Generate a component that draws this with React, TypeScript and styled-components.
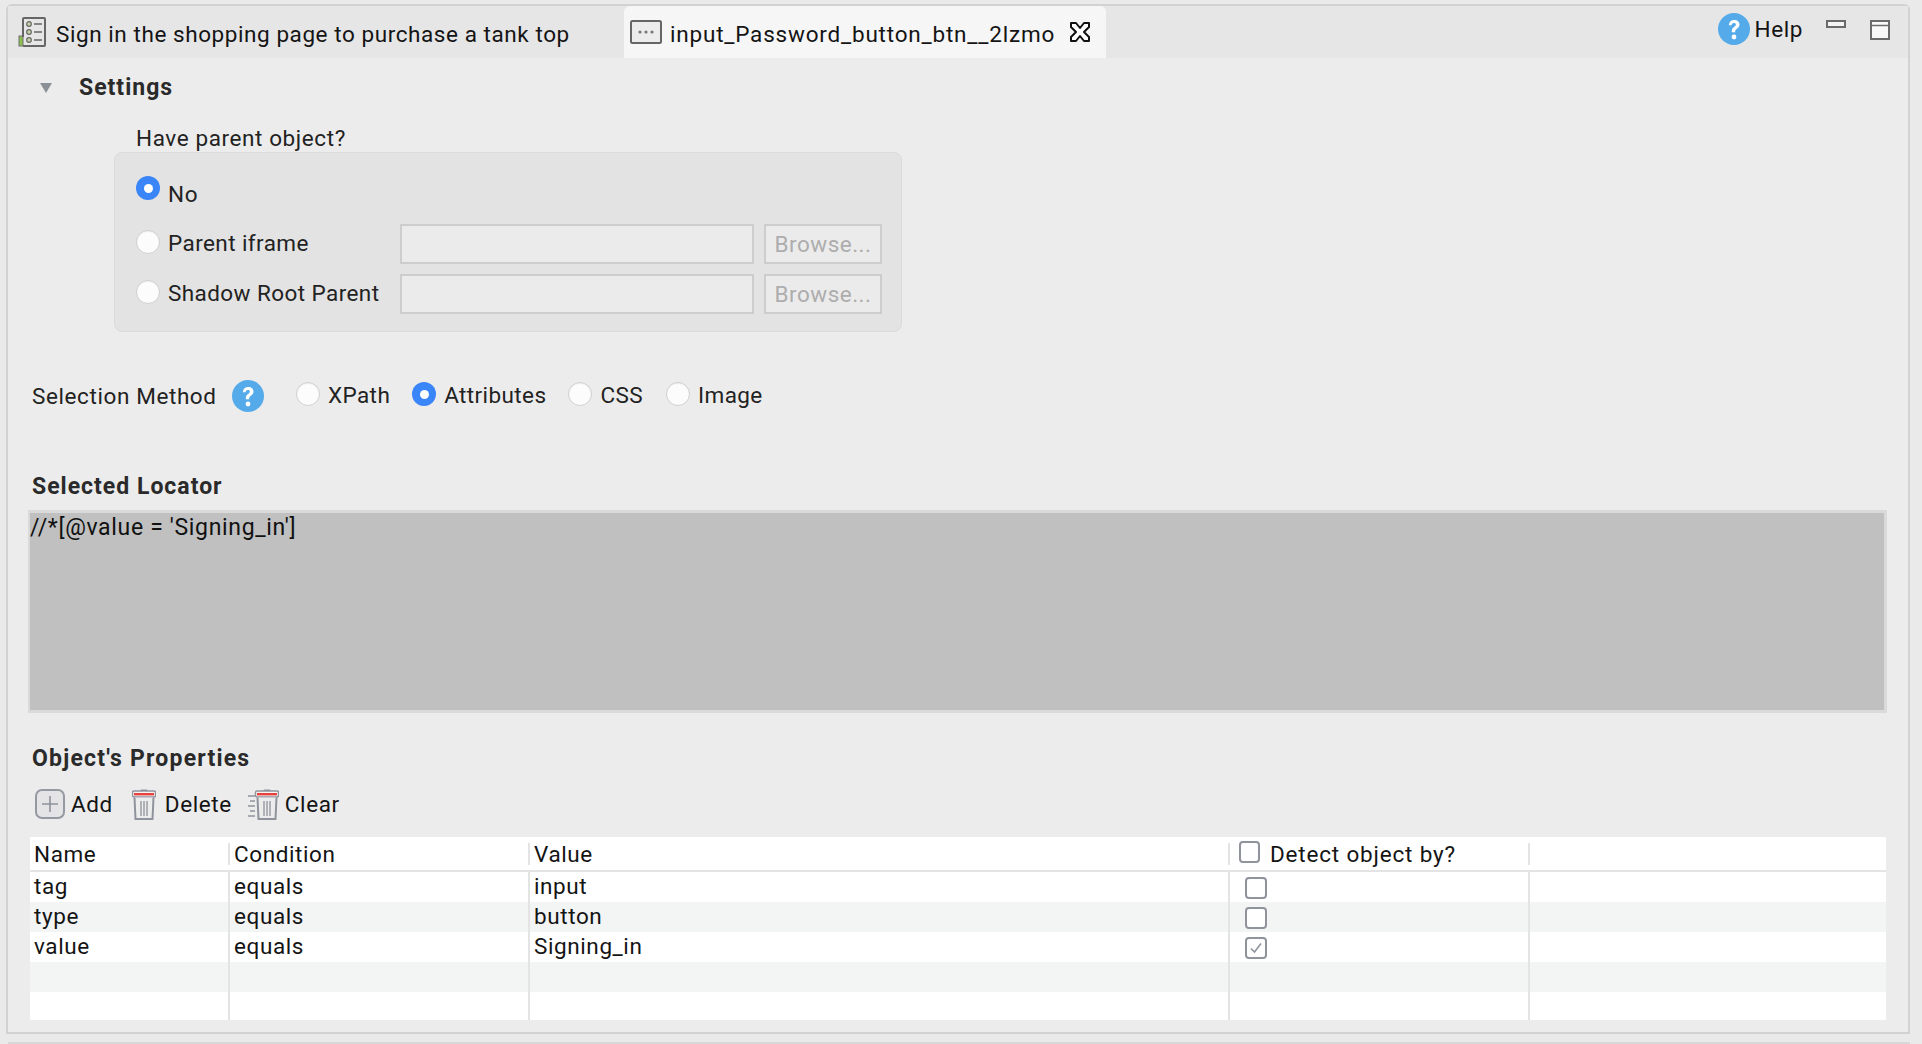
import React from "react";
import styled, { createGlobalStyle } from "styled-components";

const Global = createGlobalStyle`
  html, body { margin: 0; padding: 0; height: 1044px; overflow: hidden; background: #eaeaea; }
  body { font-family: Roboto, "Liberation Sans", sans-serif; font-size: 22.5px; color: #141414; letter-spacing: 0.6px; }
  * { box-sizing: border-box; }
`;

const Page = styled.div`
  width: 1922px; height: 1044px; display: flex; flex-direction: column; overflow: hidden;
`;
const Window = styled.div`
  margin: 4px 12px 0 6px; height: 1030px; flex: none;
  border: 2px solid #d2d2d2; border-top-left-radius: 6px; border-top-right-radius: 6px;
  background: #ececec; display: flex; flex-direction: column;
`;
const FooterStrip = styled.div`
  margin: 8px 12px 0 8px; height: 4px; background: #d8d8d8; flex: none;
`;
const TabBar = styled.div`
  height: 52px; background: #e6e6e6; display: flex; align-items: stretch; flex: none;
`;
const Tab = styled.div<{ $active?: boolean }>`
  display: flex; align-items: center; flex: none;
  ${p => p.$active
    ? `background:#f6f6f6; border-radius:6px 6px 0 0; width:482px; padding-left:6px;`
    : `width:616px; padding-left:10px;`}
`;
const TabLabel = styled.span<{ $gap: number; $spacing: number }>`
  display: block; margin: 3px 0 0 ${p => p.$gap}px; white-space: nowrap; letter-spacing: ${p => p.$spacing}px;
`;
const CloseBtn = styled.span`
  display: flex; margin-left: 14px;
`;
const TabSpacer = styled.div`flex: 1;`;
const HelpLink = styled.div`
  display: flex; align-items: center; margin-top: -6px; gap: 5px;
`;
const WinButtons = styled.div`
  display: flex; align-items: flex-start; gap: 24px; padding: 14px 18px 0 23px;
`;
const Body = styled.div`
  flex: 1; padding: 0 21px 0 20px; display: flex; flex-direction: column;
`;
const SectionHeader = styled.div`
  height: 30px; margin-top: 14px; display: flex; align-items: center; font-weight: 700; font-size: 23px; color: #2a2a2a;
  letter-spacing: 1px;
`;
const Triangle = styled.span`
  width: 0; height: 0; margin: 2px 27px 0 12px;
  border-left: 6px solid transparent; border-right: 6px solid transparent; border-top: 10px solid #8b9096;
`;
const ParentLabel = styled.div`
  height: 28px; line-height: 28px; margin: 22px 0 0 108px; color: #222;
`;
const GroupBox = styled.div`
  width: 788px; height: 180px; margin-left: 86px; flex: none;
  background: #e3e3e3; border: 1px solid #dbdbdb; border-radius: 8px;
  padding: 23px 19px 0 21px; display: flex; flex-direction: column;
`;
const NoRow = styled.div`
  height: 38px; display: flex; align-items: flex-start; gap: 8px; line-height: 37px; color: #222;
`;
const ParentRow = styled.div`
  height: 40px; margin-top: 10px; display: flex; align-items: center; color: #222;
`;
const RowRadio = styled.span`
  display: flex; margin-bottom: 4px;
`;
const RadioLabel = styled.span`
  width: 232px; margin: 0 0 2px 8px; white-space: nowrap; flex: none; letter-spacing: 0.42px;
`;
const Radio = styled.span<{ $on?: boolean }>`
  width: 24px; height: 24px; border-radius: 50%; flex: none; display: inline-flex; align-items: center; justify-content: center;
  ${p => p.$on
    ? `background:#3a85f7;`
    : `background:#fcfcfc; border:1px solid #cfcfcf; box-shadow: inset 0 1px 1px rgba(0,0,0,0.05);`}
  &::after { content: ""; width: 9px; height: 9px; border-radius: 50%; background: ${p => (p.$on ? "#fff" : "transparent")}; }
`;
const FakeInput = styled.div`
  width: 354px; height: 40px; background: #ebebeb; border: 2px solid #cdcdcd; flex: none;
`;
const Browse = styled.div`
  width: 118px; height: 40px; margin-left: 10px; background: #ebebeb; border: 2px solid #cdcdcd; color: #adadad;
  display: flex; align-items: center; justify-content: center; letter-spacing: 0.5px; flex: none;
`;
const MethodRow = styled.div`
  height: 32px; margin: 48px 0 0 4px; display: flex; align-items: center; color: #222;
`;
const MethodTitle = styled.span`
  width: 200px; flex: none; white-space: nowrap;
`;
const MethodOption = styled.span<{ $gap: number }>`
  display: inline-flex; align-items: center; gap: 8px; margin-left: ${p => p.$gap}px; flex: none; letter-spacing: 0.4px;
  & > span:last-child { margin-top: -3px; white-space: nowrap; }
  & > span:first-child { margin-top: -4px; }
`;
const SubTitle = styled.div`
  height: 30px; line-height: 30px; margin-left: 4px; font-weight: 700; font-size: 23px; color: #2a2a2a; letter-spacing: 1px;
`;
const LocatorTitle = styled(SubTitle)`margin-top: 60px;`;
const PropsTitle = styled(SubTitle)`margin-top: 30px; line-height: 32px; letter-spacing: 1.2px;`;
const LocatorBox = styled.div`
  height: 203px; margin-top: 8px; background: #c0c0c0; border: solid #dadada; border-width: 3px 3px 3px 2px; padding-top: 2px;
  font-size: 23px; line-height: 26px; color: #111; flex: none; letter-spacing: 0.67px;
`;
const Toolbar = styled.div`
  height: 32px; margin: 15px 0 0 7px; display: flex; align-items: center; flex: none;
`;
const ToolLabel = styled.span<{ $l: number; $r: number }>`
  margin-left: ${p => p.$l}px; margin-right: ${p => p.$r}px;
`;
const Table = styled.div`
  margin: 17px 1px 0 2px; height: 183px; background: #fff; display: flex; flex-direction: column; flex: none; overflow: hidden;
`;
const HeaderRow = styled.div`
  height: 35px; display: grid; grid-template-columns: 200px 300px 700px 300px 1fr; border-bottom: 2px solid #e4e4e4; flex: none; align-items: center;
`;
const HeadCell = styled.div`
  height: 22px; padding: 0 0 0 4px; display: flex; align-items: center; border-right: 2px solid #e4e4e4; white-space: nowrap;
  &:last-child { border-right: 0; }
`;
const DetectLabel = styled.span`
  letter-spacing: 0.82px;
`;
const Row = styled.div<{ $alt?: boolean; $h?: number }>`
  height: ${p => p.$h ?? 30}px; display: grid; grid-template-columns: 200px 300px 700px 300px 1fr; flex: none;
  background: ${p => (p.$alt ? "#f3f4f4" : "#fff")};
`;
const Cell = styled.div`
  padding: 0 0 2px 4px; display: flex; align-items: center; border-right: 2px solid #e4e4e4; white-space: nowrap;
  &:last-child { border-right: 0; }
`;
const CheckCell = styled(Cell)`padding: 2px 0 0 15px;`;
const HeadCheck = styled.span`
  width: 21px; height: 22px; border: 2px solid #8f949c; border-radius: 4px; background: #fff; margin: -4px 10px 0 5px; flex: none;
`;
const Check = styled.span`
  width: 22px; height: 22px; border: 2px solid #8f949c; border-radius: 4px; background: #fff; flex: none; display: flex; align-items: center; justify-content: center;
`;

const TestIcon = () => (
  <svg width="28" height="30" viewBox="0 0 28 30" fill="none">
    <rect x="1" y="19" width="4" height="10" fill="#8cbf4e" stroke="#6e6e6e" strokeWidth="1" />
    <path d="M5 20V2a1 1 0 0 1 1-1h20a1 1 0 0 1 1 1v26a1 1 0 0 1-1 1H5" stroke="#666" strokeWidth="2" />
    <circle cx="11" cy="7" r="2.3" fill="#c8d8a8" stroke="#666" strokeWidth="1.2" />
    <circle cx="11" cy="15" r="2.3" fill="#c8d8a8" stroke="#666" strokeWidth="1.2" />
    <circle cx="11" cy="23" r="2.3" fill="#c8d8a8" stroke="#666" strokeWidth="1.2" />
    <path d="M16 7h8M16 15h8M16 23h8" stroke="#666" strokeWidth="1.6" />
  </svg>
);
const ObjectIcon = () => (
  <svg width="32" height="24" viewBox="0 0 32 24" fill="none">
    <rect x="1" y="1" width="30" height="22" rx="1.5" fill="#ececec" stroke="#666" strokeWidth="2" />
    <circle cx="10" cy="12" r="1.6" fill="#777" /><circle cx="16" cy="12" r="1.6" fill="#777" /><circle cx="22" cy="12" r="1.6" fill="#777" />
  </svg>
);
const CloseIcon = () => (
  <svg width="22" height="22" viewBox="0 0 22 22" fill="#fff">
    <path d="M2 2h5l4 5 4-5h5v4l-5 5 5 5v4h-5l-4-5-4 5H2v-4l5-5-5-5z" stroke="#111" strokeWidth="2" strokeLinejoin="round" />
  </svg>
);
const HelpIcon = ({ size = 32 }: { size?: number }) => (
  <svg width={size} height={size} viewBox="0 0 32 32">
    <circle cx="16" cy="16" r="16" fill="#55abea" />
    <path d="M10.8 12.2c.2-3.3 2.4-5.2 5.5-5.2 3.1 0 5.2 1.9 5.2 4.5 0 2-1 3.1-2.6 4.2-1.3.9-1.7 1.5-1.7 3v.5h-3.4v-.9c0-2.2.7-3.3 2.3-4.4 1.3-.9 1.8-1.4 1.8-2.3 0-1-.8-1.7-2-1.7-1.3 0-2.1.8-2.3 2.4z" fill="#fff" />
    <circle cx="16" cy="24" r="2.4" fill="#fff" />
  </svg>
);
const MinIcon = () => (
  <svg width="20" height="8" viewBox="0 0 20 8" fill="#f4f4f4"><rect x="1" y="1" width="18" height="6" stroke="#6a6a6a" strokeWidth="2" /></svg>
);
const MaxIcon = () => (
  <svg width="20" height="20" viewBox="0 0 20 20" fill="#f8f8f8"><rect x="1" y="1" width="18" height="18" stroke="#6a6a6a" strokeWidth="2" /><path d="M1 5.5h18" stroke="#6a6a6a" strokeWidth="1.5" /></svg>
);
const AddIcon = () => (
  <svg width="30" height="30" viewBox="0 0 30 30" fill="#e4e4e6">
    <rect x="1" y="1" width="28" height="28" rx="6" stroke="#9599a1" strokeWidth="2" />
    <path d="M15 7v16M7 15h16" stroke="#8d9199" strokeWidth="1.6" />
  </svg>
);
const Trash = () => (
  <>
    <path d="M9 1.5h6l1 2H8z" fill="#8f939b" />
    <rect x="0.5" y="3" width="23" height="6" rx="1.5" fill="#f4f4f4" stroke="#8f939b" strokeWidth="1.4" />
    <rect x="2" y="5" width="20" height="2.4" fill="#e8403a" />
    <path d="M2.5 9.5 3.5 31h17l1-21.5" fill="#ececec" stroke="#8f939b" strokeWidth="2" />
    <path d="M9 13v15M12 13v15M15 13v15" stroke="#8f939b" strokeWidth="1.3" />
  </>
);
const DeleteIcon = () => (
  <svg width="24" height="32" viewBox="0 0 24 32" fill="none"><Trash /></svg>
);
const ClearIcon = () => (
  <svg width="32" height="32" viewBox="0 0 32 32" fill="none">
    <g transform="translate(8 0)"><Trash /></g>
    <path d="M1 8h7M3 13h5M1 18h7M3 23h5M1 28h7" stroke="#8f939b" strokeWidth="1.6" />
  </svg>
);
const Tick = () => (
  <svg width="14" height="14" viewBox="0 0 14 14" fill="none"><path d="M2 7.5 5.5 11 12 2.5" stroke="#8f949c" strokeWidth="1.6" /></svg>
);

const rows: [string, string, string, number][] = [
  ["tag", "equals", "input", 0],
  ["type", "equals", "button", 0],
  ["value", "equals", "Signing_in", 1],
];

export default function App() {
  return (
    <Page>
      <Global />
      <Window>
        <TabBar>
          <Tab>
            <TestIcon />
            <TabLabel $gap={10} $spacing={0.57}>Sign in the shopping page to purchase a tank top</TabLabel>
          </Tab>
          <Tab $active>
            <ObjectIcon />
            <TabLabel $gap={8} $spacing={0.8}>input_Password_button_btn__2lzmo</TabLabel>
            <CloseBtn><CloseIcon /></CloseBtn>
          </Tab>
          <TabSpacer />
          <HelpLink><HelpIcon />Help</HelpLink>
          <WinButtons>
            <MinIcon />
            <MaxIcon />
          </WinButtons>
        </TabBar>
        <Body>
          <SectionHeader><Triangle />Settings</SectionHeader>
          <ParentLabel>Have parent object?</ParentLabel>
          <GroupBox>
            <NoRow><Radio $on />No</NoRow>
            <ParentRow>
              <RowRadio><Radio /></RowRadio>
              <RadioLabel>Parent iframe</RadioLabel>
              <FakeInput />
              <Browse>Browse...</Browse>
            </ParentRow>
            <ParentRow>
              <RowRadio><Radio /></RowRadio>
              <RadioLabel>Shadow Root Parent</RadioLabel>
              <FakeInput />
              <Browse>Browse...</Browse>
            </ParentRow>
          </GroupBox>
          <MethodRow>
            <MethodTitle>Selection Method</MethodTitle>
            <HelpIcon />
            <MethodOption $gap={32}><Radio /><span>XPath</span></MethodOption>
            <MethodOption $gap={22}><Radio $on /><span>Attributes</span></MethodOption>
            <MethodOption $gap={22}><Radio /><span>CSS</span></MethodOption>
            <MethodOption $gap={23}><Radio /><span>Image</span></MethodOption>
          </MethodRow>
          <LocatorTitle>Selected Locator</LocatorTitle>
          <LocatorBox>//*[@value = 'Signing_in']</LocatorBox>
          <PropsTitle>Object's Properties</PropsTitle>
          <Toolbar>
            <AddIcon />
            <ToolLabel $l={6} $r={19}>Add</ToolLabel>
            <DeleteIcon />
            <ToolLabel $l={9} $r={15}>Delete</ToolLabel>
            <ClearIcon />
            <ToolLabel $l={6} $r={0}>Clear</ToolLabel>
          </Toolbar>
          <Table>
            <HeaderRow>
              <HeadCell>Name</HeadCell>
              <HeadCell>Condition</HeadCell>
              <HeadCell>Value</HeadCell>
              <HeadCell><HeadCheck /><DetectLabel>Detect object by?</DetectLabel></HeadCell>
              <HeadCell />
            </HeaderRow>
            {rows.map((r, i) => (
              <Row key={r[0]} $alt={i % 2 === 1}>
                <Cell>{r[0]}</Cell>
                <Cell>{r[1]}</Cell>
                <Cell>{r[2]}</Cell>
                <CheckCell><Check>{r[3] ? <Tick /> : null}</Check></CheckCell>
                <Cell />
              </Row>
            ))}
            <Row $alt><Cell /><Cell /><Cell /><Cell /><Cell /></Row>
            <Row $h={28}><Cell /><Cell /><Cell /><Cell /><Cell /></Row>
          </Table>
        </Body>
      </Window>
      <FooterStrip />
    </Page>
  );
}
